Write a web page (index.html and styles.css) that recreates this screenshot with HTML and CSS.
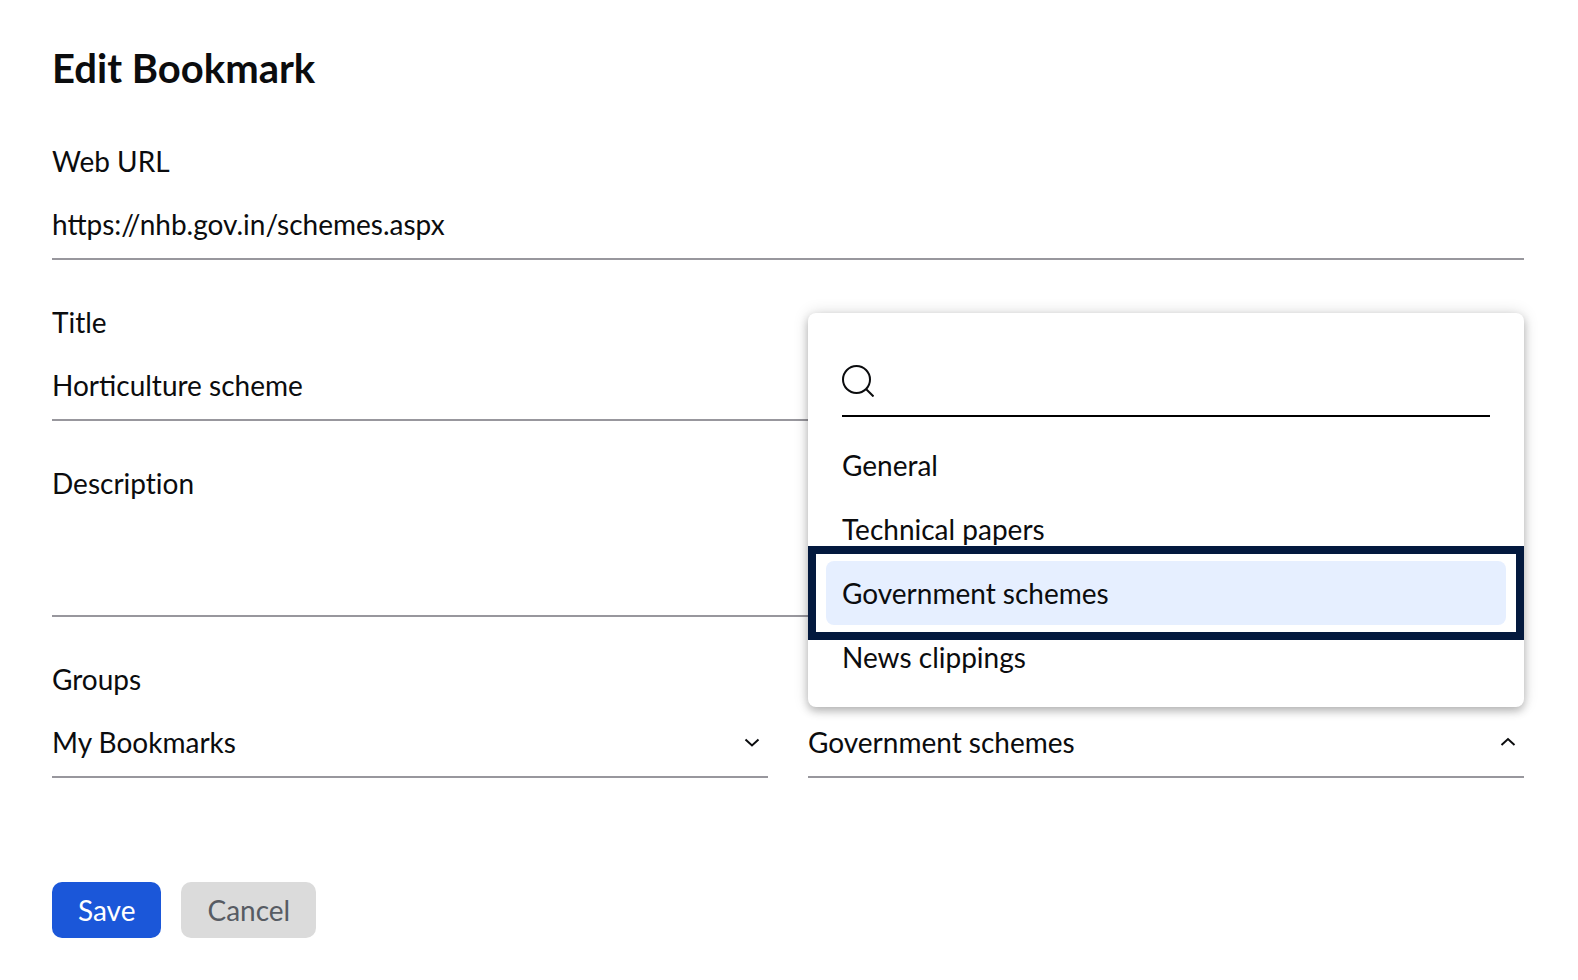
FILE: index.html
```html
<!DOCTYPE html>
<html lang="en">
<head>
    <meta charset="UTF-8">
    <meta name="viewport" content="width=device-width, initial-scale=1">
    <title>Edit Bookmark</title>
    <link rel="stylesheet" href="styles.css">
</head>
<body>
<form class="bookmark-form">
    <h1>Edit Bookmark</h1>

    <div class="field">
        <label for="url">Web URL</label>
        <input class="control" type="text" id="url" value="https://nhb.gov.in/schemes.aspx" spellcheck="false">
    </div>

    <div class="field">
        <label for="title">Title</label>
        <input class="control" type="text" id="title" value="Horticulture scheme" spellcheck="false">
    </div>

    <div class="field">
        <label for="description">Description</label>
        <textarea class="control description" id="description"></textarea>
    </div>

    <div class="field">
        <label for="group">Groups</label>
        <div class="columns">
            <div class="select">
                <select class="control" id="group">
                    <option>My Bookmarks</option>
                </select>
                <svg class="arrow" viewBox="0 0 16 16" aria-hidden="true"><path d="M1.5 5.5l6.5 6 6.5-6"/></svg>
            </div>

            <div class="select">
                <select class="control" id="subgroup" aria-label="Sub group">
                    <option>General</option>
                    <option>Technical papers</option>
                    <option selected>Government schemes</option>
                    <option>News clippings</option>
                </select>
                <svg class="arrow" viewBox="0 0 16 16" aria-hidden="true"><path d="M1.5 11l6.5-6 6.5 6"/></svg>

                <!-- list opens above the select -->
                <div class="menu">
                    <div class="search">
                        <svg class="search-icon" viewBox="0 0 32 32" aria-hidden="true">
                            <circle cx="14.5" cy="14.5" r="13.5"/>
                            <path d="M24 24l7.5 7.5"/>
                        </svg>
                        <input type="text" aria-label="Search">
                    </div>
                    <ul>
                        <li><button type="button">General</button></li>
                        <li><button type="button">Technical papers</button></li>
                        <li class="selected"><button type="button">Government schemes</button></li>
                        <li><button type="button">News clippings</button></li>
                    </ul>
                </div>
            </div>
        </div>
    </div>

    <div class="actions">
        <button type="submit" class="btn save">Save</button>
        <button type="button" class="btn cancel">Cancel</button>
    </div>
</form>
</body>
</html>
```

FILE: styles.css
```css
* {
    box-sizing: border-box;
    margin: 0;
    padding: 0;
}

body {
    font-family: Lato, "Liberation Sans", sans-serif;
    font-size: 28px;
    line-height: 34px;
    color: #0b0c0e;
    background-color: #fff;
}

input,
textarea,
select,
button {
    font: inherit;
    color: inherit;
    border: none;
    border-radius: 0;
    outline: none;
    background-color: transparent;
}

.bookmark-form {
    padding: 44px 54px 42px 52px;
}

h1 {
    font-size: 40px;
    line-height: 48px;
    font-weight: 700;
    margin-bottom: 52px;
}

.field {
    margin-bottom: 45px;
}

.field label {
    display: block;
    margin-bottom: 12px;
    font-variant-ligatures: none;
}

.control {
    display: block;
    width: 100%;
    height: 70px;
    border-bottom: 2px solid #98979d;
}

.description {
    height: 105px;
    padding: 16px 0;
    resize: none;
}

.columns {
    display: grid;
    grid-template-columns: 1fr 1fr;
    gap: 40px;
}

.select {
    position: relative;
}

.select select {
    appearance: none;
    cursor: pointer;
}

svg {
    fill: none;
    stroke: #0b0c0e;
    stroke-width: 2;
}

.arrow {
    position: absolute;
    right: 8px;
    top: 26px;
    width: 16px;
    height: 16px;
    pointer-events: none;
}

/* menu */
.menu {
    position: absolute;
    left: 0;
    right: 0;
    bottom: 100%;
    margin-bottom: 1px;
    padding: 34px 18px 18px;
    border-radius: 8px;
    background-color: #fff;
    box-shadow: 0 4px 8px rgba(0, 0, 0, 0.24), 0 0 16px rgba(0, 0, 0, 0.14);
}

.search {
    display: flex;
    align-items: center;
    gap: 16px;
    height: 70px;
    margin: 0 16px 16px;
    border-bottom: 2px solid #000;
}

.search-icon {
    flex: none;
    width: 32px;
    height: 32px;
}

.search input {
    flex: 1;
    min-width: 0;
}

.menu ul {
    list-style: none;
}

.menu li {
    position: relative;
}

.menu li button {
    display: block;
    width: 100%;
    height: 64px;
    padding: 0 16px;
    border-radius: 8px;
    text-align: left;
    font-variant-ligatures: none;
    cursor: pointer;
}

.menu .selected button {
    background-color: #e6efff;
}

/* frame around the picked option */
.menu .selected::after {
    content: "";
    position: absolute;
    inset: -15px -18px;
    border: 8px solid #03193e;
    pointer-events: none;
}

/* buttons */
.actions {
    display: flex;
    gap: 20px;
    padding-top: 59px;
}

.btn {
    height: 56px;
    padding: 0 26px;
    border-radius: 10px;
    cursor: pointer;
}

.save {
    color: #fff;
    background-color: #1b57d9;
}

.cancel {
    color: #575b63;
    background-color: #dbdbdb;
}
```
